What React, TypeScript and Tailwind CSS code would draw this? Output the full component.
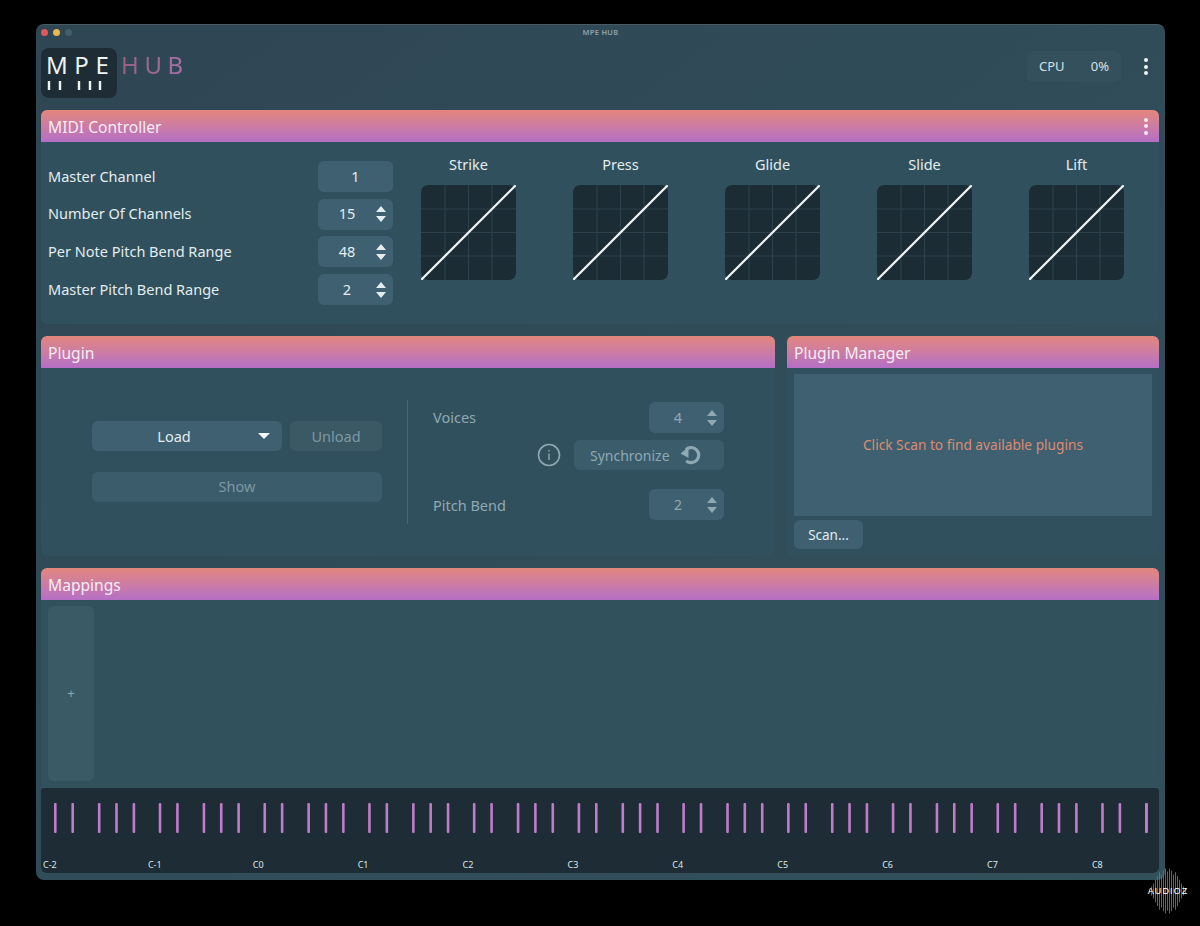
const CURVES = ['Strike', 'Press', 'Glide', 'Slide', 'Lift'];
const OCTAVES = ['C-2', 'C-1', 'C0', 'C1', 'C2', 'C3', 'C4', 'C5', 'C6', 'C7', 'C8'];
const MIDI_ROWS = [
  { label: 'Master Channel', value: '1', arrows: false },
  { label: 'Number Of Channels', value: '15', arrows: true },
  { label: 'Per Note Pitch Bend Range', value: '48', arrows: true },
  { label: 'Master Pitch Bend Range', value: '2', arrows: true },
];

// black key positions inside one octave, in px
const BLACK_KEYS = [0, 17.4, 43.9, 61.2, 78.6];
const WAVE = [3, 6, 10, 15, 20, 25, 22, 27, 30, 26, 30, 27, 22, 25, 20, 15, 10, 6, 3];

function PanelHeader({ title, menu }: { title: string; menu?: boolean }) {
  return (
    <div className="h-8 shrink-0 rounded-t-[6px] bg-gradient-to-b from-[#e4867a] to-[#b56ec6] pl-[7px] pr-[11px] flex items-center justify-between text-[15.6px] text-[#f6ecf3]">
      <span className="pt-[3px]">{title}</span>
      {menu && <Dots color="bg-[#f6e6f2]" />}
    </div>
  );
}

function Dots({ color }: { color: string }) {
  return (
    <div className="flex flex-col gap-[2.5px]">
      <span className={`w-1 h-1 rounded-full ${color}`} />
      <span className={`w-1 h-1 rounded-full ${color}`} />
      <span className={`w-1 h-1 rounded-full ${color}`} />
    </div>
  );
}

function Arrows({ dim }: { dim?: boolean }) {
  return (
    <svg width="12" height="18" viewBox="0 0 12 18" className="shrink-0">
      <path d="M6 1 L11 7 L1 7 Z M1 11 L11 11 L6 17 Z" fill={dim ? '#8fa9b3' : '#e3edf0'} />
    </svg>
  );
}

function Spinner({ value, dim }: { value: string; dim?: boolean }) {
  return (
    <div className={`w-[75px] h-[31px] rounded-[6px] bg-[#3e6070] flex items-center pl-[20px] pr-[6px] text-[14.5px] ${dim ? 'text-[#8fa9b3]' : 'text-[#e3edf0]'}`}>
      <span className="w-[18px] text-center">{value}</span>
      <span className="flex-1" />
      <Arrows dim={dim} />
    </div>
  );
}

function Curve({ title }: { title: string }) {
  return (
    <div className="w-[95px] flex flex-col items-center gap-[11px]">
      <span className="text-[14.5px] leading-[20px] text-[#e3edf0]">{title}</span>
      <svg width="95" height="95" viewBox="0 0 95 95">
        <rect width="95" height="95" rx="7" fill="#1b2c34" />
        <path d="M24 0V95M47.5 0V95M71 0V95M0 24H95M0 47.5H95M0 71H95" stroke="#2c414a" strokeWidth="1.2" />
        <path d="M1 94 L94 1" stroke="#f2f5f6" strokeWidth="2.2" strokeLinecap="round" />
      </svg>
    </div>
  );
}

function SyncIcon() {
  return (
    <svg width="22" height="22" viewBox="0 0 22 22" className="shrink-0 -ml-[3px]">
      <path d="M6 5.5 A7.6 7.6 0 1 1 6.2 16.9" fill="none" stroke="#8fa9b3" strokeWidth="3.2" />
      <path d="M0.5 9.5 L8.5 3 L8.5 14 Z" fill="#8fa9b3" />
    </svg>
  );
}

function Keyboard() {
  return (
    <div className="h-[85px] shrink-0 rounded-b-[6px] rounded-t-[3px] bg-[#1d2c35] flex flex-col pl-[2px] overflow-hidden">
      <svg width="1116" height="31" viewBox="0 0 1116 31" className="mt-[15px] shrink-0">
        {Array.from({ length: 11 }).map((_, o) =>
          BLACK_KEYS.map((x) => (
            <rect key={`${o}-${x}`} x={11 + o * 104.72 + x} y="0" width="2.6" height="30" rx="1" fill="#c07ccb" />
          ))
        )}
        <rect x="1102.2" y="0" width="2.6" height="30" rx="1" fill="#c07ccb" />
      </svg>
      <div className="flex mt-[25px] text-[9px] leading-[12px] text-[#dfe8eb]">
        {OCTAVES.map((o) => (
          <span key={o} className="w-[104.9px] shrink-0">{o}</span>
        ))}
      </div>
    </div>
  );
}

export default function App() {
  return (
    <div className="relative w-[1200px] h-[926px] bg-black overflow-hidden" style={{ fontFamily: '"Noto Sans", sans-serif' }}>
      <div className="ml-[36px] pt-[24px]">
        <div className="w-[1129px] h-[856px] rounded-[8px] border-t border-[#4a5a62] bg-gradient-to-br from-[#2f4653] via-[#304c59] to-[#31505a] flex flex-col pl-[5px] pr-[6px]">
          {/* title bar */}
          <div className="h-[15px] shrink-0 flex items-center">
            <div className="flex gap-[5px]">
              <span className="w-[7px] h-[7px] rounded-full bg-[#dc5a5a]" />
              <span className="w-[7px] h-[7px] rounded-full bg-[#e8b84a]" />
              <span className="w-[7px] h-[7px] rounded-full bg-[#42606c]" />
            </div>
            <span className="flex-1 text-center text-[7.5px] font-semibold tracking-[0.3px] text-[#8fa3ac] pr-[30px]">MPE HUB</span>
          </div>

          {/* top bar */}
          <div className="h-[70px] shrink-0 flex pt-[8px]">
            <div className="w-[76px] h-[50px] rounded-[8px] bg-[#1d2c35] flex flex-col pl-[5px] pt-[2px]">
              <span className="text-[24px] leading-[30px] tracking-[6.6px] text-[#eef3f4] whitespace-nowrap">MPE</span>
              <svg width="60" height="10" viewBox="0 0 60 10" className="mt-[1px]">
                <path d="M3 0V9M14 0V9M33 0V9M44 0V9M54 0V9" stroke="#eef3f4" strokeWidth="2.4" />
              </svg>
            </div>
            <span className="ml-[4px] text-[24px] leading-[30px] tracking-[5.6px] mt-[2px] bg-gradient-to-r from-[#95607f] to-[#ab72ab] bg-clip-text text-transparent">HUB</span>
            <div className="flex-1" />
            <div className="w-[94px] h-[31px] mt-[3px] rounded-[6px] bg-[#33505c] flex items-center justify-between px-[12px] text-[13px] text-[#d3e2e8]">
              <span>CPU</span>
              <span>0%</span>
            </div>
            <div className="w-[38px] flex justify-center items-center h-[31px] mt-[3px] pl-[12px]">
              <Dots color="bg-[#eef3f4]" />
            </div>
          </div>

          {/* MIDI Controller */}
          <section className="h-[214px] shrink-0 rounded-[6px] bg-[#31505d] flex flex-col">
            <PanelHeader title="MIDI Controller" menu />
            <div className="flex-1 flex pl-[7px] pt-[12px]">
              <div className="w-[345px] flex flex-col gap-[6.7px] pt-[7px] shrink-0">
                {MIDI_ROWS.map((r) => (
                  <div key={r.label} className="flex items-center justify-between text-[14.5px] text-[#e3edf0]">
                    <span>{r.label}</span>
                    {r.arrows ? (
                      <Spinner value={r.value} />
                    ) : (
                      <div className="w-[75px] h-[31px] rounded-[6px] bg-[#3e6070] flex items-center justify-center">{r.value}</div>
                    )}
                  </div>
                ))}
              </div>
              <div className="ml-[28px] flex gap-[57px]">
                {CURVES.map((c) => (
                  <Curve key={c} title={c} />
                ))}
              </div>
            </div>
          </section>

          <div className="flex gap-[12px] mt-[12px] shrink-0">
            {/* Plugin */}
            <section className="w-[734px] h-[220px] rounded-[6px] bg-[#31505d] flex flex-col">
              <PanelHeader title="Plugin" />
              <div className="flex-1 flex items-start">
                <div className="ml-[51px] mt-[53px] w-[290px] flex flex-col gap-[21px] text-[14.5px]">
                  <div className="flex gap-[8px]">
                    <div className="w-[190px] h-[30px] rounded-[6px] bg-[#3e6070] flex items-center justify-center relative text-[#e3edf0] pt-[1px]">
                      <span className="pr-[26px]">Load</span>
                      <svg width="14" height="8" viewBox="0 0 14 8" className="absolute right-[11px] top-[11px]">
                        <path d="M1 1H13L7 7Z" fill="#f2f5f6" />
                      </svg>
                    </div>
                    <div className="w-[92px] h-[30px] rounded-[6px] bg-[#3a5965] flex items-center justify-center text-[#7f98a2] pt-[1px]">Unload</div>
                  </div>
                  <div className="h-[30px] rounded-[6px] bg-[#3a5c6b] flex items-center justify-center text-[#7f98a2]">Show</div>
                </div>
                <div className="ml-[25px] mt-[32px] w-px h-[124px] bg-[#47646f]" />
                <div className="ml-[25px] mt-[34px] w-[291px] flex flex-col text-[14.5px] text-[#8fa9b3]">
                  <div className="flex items-center justify-between">
                    <span>Voices</span>
                    <Spinner value="4" dim />
                  </div>
                  <div className="flex items-center justify-end gap-[13px] mt-[7px]">
                    <svg width="24" height="24" viewBox="0 0 24 24">
                      <circle cx="12" cy="12" r="10.5" fill="none" stroke="#8fa9b3" strokeWidth="1.6" />
                      <path d="M12 10.5V17M12 7V8.5" stroke="#8fa9b3" strokeWidth="1.4" />
                    </svg>
                    <div className="w-[150px] h-[30px] rounded-[6px] bg-[#3a5c6b] flex items-center pl-[16px] gap-[13px] text-[14px]">
                      <span>Synchronize</span>
                      <SyncIcon />
                    </div>
                  </div>
                  <div className="flex items-center justify-between mt-[19px]">
                    <span className="pt-[2px]">Pitch Bend</span>
                    <Spinner value="2" dim />
                  </div>
                </div>
              </div>
            </section>

            {/* Plugin Manager */}
            <section className="w-[372px] h-[220px] rounded-[6px] bg-[#31505d] flex flex-col">
              <PanelHeader title="Plugin Manager" />
              <div className="mx-[7px] mt-[6px] h-[142px] bg-[#3e6070] flex items-center justify-center text-[13.7px] text-[#dd8b70]">
                Click Scan to find available plugins
              </div>
              <div className="ml-[7px] mt-[4px] w-[69px] h-[29px] rounded-[6px] bg-[#3e6070] flex items-center justify-center text-[13.5px] text-[#e3edf0] pt-[1px]">
                Scan...
              </div>
            </section>
          </div>

          {/* Mappings */}
          <section className="mt-[12px] rounded-t-[6px] bg-[#31525c] flex flex-col shrink-0">
            <PanelHeader title="Mappings" />
            <div className="h-[188px] pl-[7px] pt-[6px]">
              <div className="w-[46px] h-[175px] rounded-[6px] bg-[#3a5b66] flex items-center justify-center text-[13px] text-[#90a6ad] pt-[1px]">+</div>
            </div>
            <Keyboard />
          </section>
        </div>
      </div>

      {/* watermark */}
      <div className="absolute left-[1144px] top-[866px] w-[48px] h-[50px] flex flex-col items-center justify-center">
        <svg width="44" height="46" viewBox="0 0 44 46" className="absolute left-[2px] top-[2px]">
          {WAVE.map((h, i) => (
            <rect key={i} x={3 + i * 2} y={23 - h * 0.75} width="0.9" height={h * 1.5} fill="#707070" />
          ))}
        </svg>
        <span className="relative text-[9px] leading-[10px] tracking-[1.1px] text-white" style={{ fontFamily: '"Liberation Sans", sans-serif' }}>AUDIOZ</span>
      </div>
    </div>
  );
}
